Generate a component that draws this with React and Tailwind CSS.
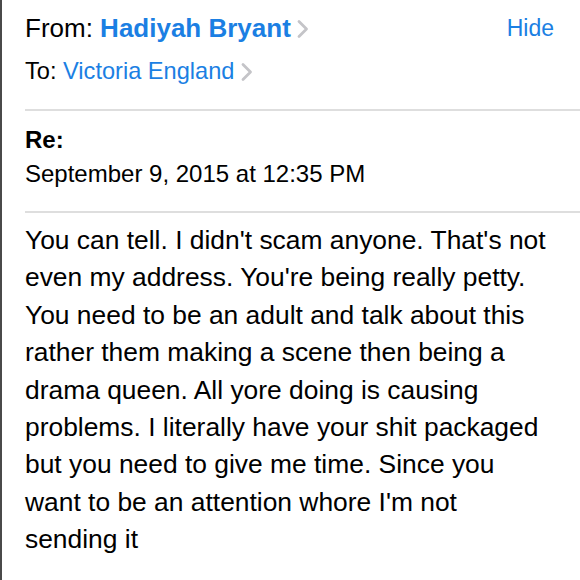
import React from "react";

const Chevron = ({ className }) => (
  <svg className={`shrink-0 w-[14px] h-[22px] ${className}`} viewBox="0 0 14 22" fill="none">
    <path d="M3 3.5 L10.5 11 L3 18.5" stroke="#c4c4c8" strokeWidth="2.8" strokeLinecap="round" strokeLinejoin="round" />
  </svg>
);

const lines = [
  "You can tell. I didn't scam anyone. That's not",
  "even my address. You're being really petty.",
  "You need to be an adult and talk about this",
  "rather them making a scene then being a",
  "drama queen. All yore doing is causing",
  "problems. I literally have your shit packaged",
  "but you need to give me time. Since you",
  "want to be an attention whore I'm not",
  "sending it",
];

export default function App() {
  return (
    <div
      className="w-[580px] h-[580px] bg-white border-l-2 border-[#4a4a4a] overflow-hidden text-black"
      style={{ fontFamily: '"Liberation Sans", Arial, sans-serif' }}
    >
      <div className="pl-[23px]">
        <div className="flex items-center justify-between pr-[26px] pt-[10px] h-[46px]">
          <div className="flex items-center text-[26px] leading-[36px]">
            <span>From:&nbsp;</span>
            <span className="font-bold text-[#1b7fe3]">Hadiyah Bryant</span>
            <Chevron className="ml-[5px] mt-[2px]" />
          </div>
          <span className="text-[23px] leading-[36px] text-[#1b7fe3]">Hide</span>
        </div>
        <div className="flex items-center mt-[10px] text-[23.6px] leading-[30px] h-[30px]">
          <span>To:&nbsp;</span>
          <span className="text-[#1b7fe3]">Victoria England</span>
          <Chevron className="ml-[6px] mt-[1px]" />
        </div>
        <div className="mt-[23px] h-[2px] bg-[#dedede]" />
        <div className="mt-[14px] text-[24px] leading-[30px] font-bold">Re:</div>
        <div className="mt-[4px] text-[24px] leading-[30px]">September 9, 2015 at 12:35 PM</div>
        <div className="mt-[22px] h-[2px] bg-[#dedede]" />
        <div className="mt-[9px] text-[26.4px] leading-[37.4px]">
          {lines.map((l, i) => (
            <div key={i} className="whitespace-nowrap">{l}</div>
          ))}
        </div>
      </div>
    </div>
  );
}
